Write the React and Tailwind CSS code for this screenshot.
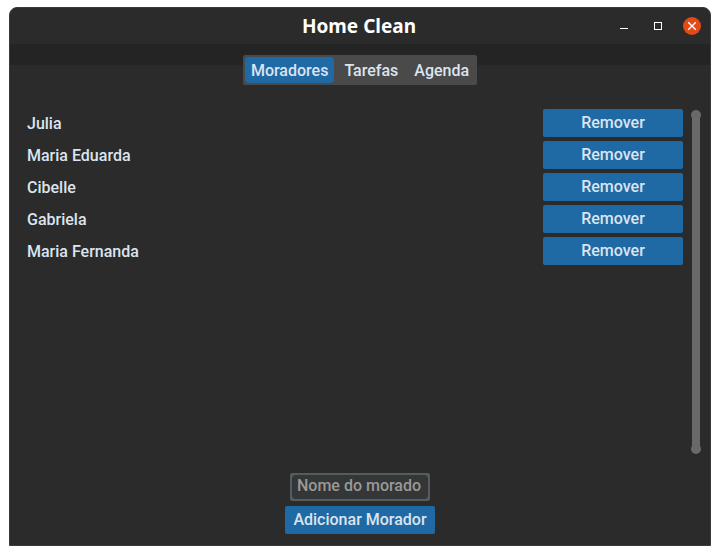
import { useState } from "react";

const tabs = ["Moradores", "Tarefas", "Agenda"];
const residents = ["Julia", "Maria Eduarda", "Cibelle", "Gabriela", "Maria Fernanda"];

function TitleBar() {
  return (
    <header className="grid h-9 shrink-0 grid-cols-[1fr_auto_1fr] items-center pr-[2px]">
      <h1 className="col-start-2 font-['Noto_Sans',sans-serif] text-[19px] leading-6 font-bold text-white">
        Home Clean
      </h1>
      <div className="flex items-center justify-end gap-4 pr-[7px]">
        <button type="button" aria-label="Minimizar" className="size-[18px]">
          <svg viewBox="0 0 18 18" className="size-full" shapeRendering="crispEdges">
            <rect x="5" y="11" width="8" height="1" fill="#fff" />
          </svg>
        </button>
        <button type="button" aria-label="Maximizar" className="size-[18px]">
          <svg viewBox="0 0 18 18" className="size-full" shapeRendering="crispEdges">
            <rect x="5.5" y="5.5" width="7" height="7" fill="none" stroke="#fff" />
          </svg>
        </button>
        <button type="button" aria-label="Fechar" className="size-[18px] rounded-full bg-[#e34a17]">
          <svg viewBox="0 0 18 18" className="size-full">
            <path d="M5.2 5.2l7.6 7.6M12.8 5.2l-7.6 7.6" stroke="#fff" strokeWidth="1.4" />
          </svg>
        </button>
      </div>
    </header>
  );
}

function Tabs({ active, onChange }) {
  return (
    <nav className="flex gap-1 self-center rounded-xs bg-[#4a4a4a] p-[2px]">
      {tabs.map((tab) => (
        <button
          key={tab}
          type="button"
          onClick={() => onChange(tab)}
          className={"h-[26px] rounded-sm px-[6px] pt-[2px] " + (tab === active ? "bg-[#1f6aa5]" : "")}
        >
          {tab}
        </button>
      ))}
    </nav>
  );
}

function ScrollBar() {
  return (
    <div className="flex w-[10px] flex-col items-center">
      <div className="size-[10px] rounded-full bg-[#696969]" />
      <div className="-my-[5px] w-2 flex-1 bg-[#696969]" />
      <div className="size-[10px] rounded-full bg-[#696969]" />
    </div>
  );
}

export default function App() {
  const [active, setActive] = useState("Moradores");

  return (
    <div className="flex min-h-screen bg-white px-[9px] pt-[7px] pb-[9px] font-[Roboto,sans-serif] text-base leading-6 font-medium text-[#dce4ee]">
      <div className="flex flex-1 flex-col overflow-hidden rounded-t-lg border border-[#3a3a3a] bg-[#2b2b2b]">
        <TitleBar />
        <main className="flex flex-1 flex-col bg-[linear-gradient(#242424_21px,#2b2b2b_21px)] py-[11px]">
          <Tabs active={active} onChange={setActive} />
          <section className="mt-6 flex flex-1 gap-2 pr-[9px] pl-[17px]">
            <ul className="flex flex-1 flex-col gap-1">
              {residents.map((name) => (
                <li key={name} className="flex h-7 items-center justify-between">
                  <span className="pt-[2px]">{name}</span>
                  <button type="button" className="h-7 w-[140px] rounded-xs bg-[#1f6aa5] pb-px">
                    Remover
                  </button>
                </li>
              ))}
            </ul>
            <div className="flex pt-px">
              <ScrollBar />
            </div>
          </section>
          <form
            className="mt-[19px] flex flex-col items-center gap-[5px]"
            onSubmit={(event) => event.preventDefault()}
          >
            <div className="flex h-7 w-[140px] rounded-xs bg-[#565b5e] p-[2px]">
              <input
                type="text"
                aria-label="Nome do morador"
                placeholder="Nome do morado"
                className="w-full rounded-sm bg-[#343638] px-[5px] pb-[2px] placeholder:text-[#9a9996] placeholder:opacity-100"
              />
            </div>
            <button type="submit" className="h-7 w-[150px] rounded-xs bg-[#1f6aa5]">
              Adicionar Morador
            </button>
          </form>
        </main>
      </div>
    </div>
  );
}
